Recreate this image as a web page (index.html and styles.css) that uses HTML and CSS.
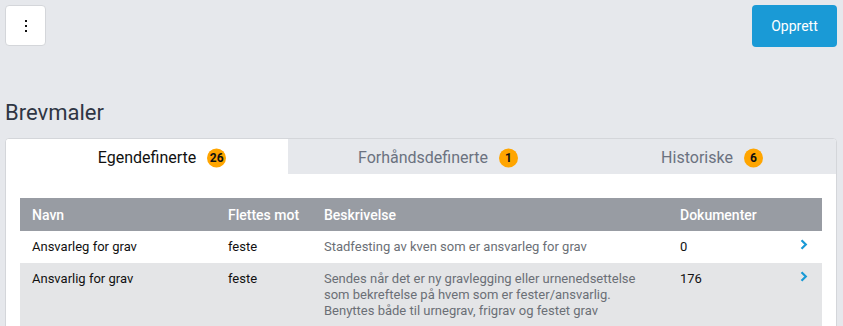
FILE: index.html
```html
<!DOCTYPE html>
<html lang="no">
<head>
<meta charset="utf-8">
<link rel="stylesheet" href="styles.css">
</head>
<body>
<div class="page">
  <div class="topbar">
    <button class="menu-btn" aria-label="Meny"><span class="dot"></span><span class="dot"></span><span class="dot"></span></button>
    <button class="primary-btn">Opprett</button>
  </div>
  <h1 class="title">Brevmaler</h1>
  <div class="card">
    <div class="tabs">
      <div class="tab active"><span class="tab-label">Egendefinerte<span class="badge">26</span></span></div>
      <div class="tab"><span class="tab-label">Forhåndsdefinerte<span class="badge">1</span></span></div>
      <div class="tab"><span class="tab-label">Historiske<span class="badge">6</span></span></div>
    </div>
    <div class="card-body">
      <table class="grid">
        <colgroup>
          <col class="c-name"><col class="c-merge"><col class="c-desc"><col class="c-docs"><col class="c-go">
        </colgroup>
        <thead>
          <tr><th>Navn</th><th>Flettes mot</th><th>Beskrivelse</th><th>Dokumenter</th><th></th></tr>
        </thead>
        <tbody>
          <tr>
            <td>Ansvarleg for grav</td><td>feste</td>
            <td class="desc">Stadfesting av kven som er ansvarleg for grav</td>
            <td>0</td>
            <td class="go"><svg width="8" height="11" viewBox="0 0 8 11"><path d="M1.5 1.2 L5.8 5.5 L1.5 9.8" fill="none" stroke="#1a9ad6" stroke-width="2.2"/></svg></td>
          </tr>
          <tr class="alt">
            <td>Ansvarlig for grav</td><td>feste</td>
            <td class="desc">Sendes når det er ny gravlegging eller urnenedsettelse<br>som bekreftelse på hvem som er fester/ansvarlig.<br>Benyttes både til urnegrav, frigrav og festet grav</td>
            <td>176</td>
            <td class="go"><svg width="8" height="11" viewBox="0 0 8 11"><path d="M1.5 1.2 L5.8 5.5 L1.5 9.8" fill="none" stroke="#1a9ad6" stroke-width="2.2"/></svg></td>
          </tr>
        </tbody>
      </table>
    </div>
  </div>
</div>
</body>
</html>
```
FILE: styles.css
```css
* { box-sizing: border-box; }
html, body { margin: 0; padding: 0; }
body {
  background: #e6e8ec;
  font-family: Roboto, "Liberation Sans", sans-serif;
  color: #111;
  overflow: hidden;
}
.page { padding: 5px 6px 0 5px; }
.topbar {
  display: flex;
  justify-content: space-between;
  align-items: flex-start;
}
.menu-btn {
  width: 41px;
  height: 41px;
  background: #fff;
  border: 1px solid #d4d6da;
  border-radius: 4px;
  display: flex;
  flex-direction: column;
  align-items: center;
  justify-content: center;
  gap: 3px;
  padding: 0;
}
.dot { width: 2px; height: 2px; background: #111; display: block; }
.primary-btn {
  width: 85px;
  height: 42px;
  background: #1a9ad6;
  color: #fff;
  border: none;
  border-radius: 4px;
  font-family: Roboto, "Liberation Sans", sans-serif;
  font-size: 14px;
  font-weight: 400;
}
.title {
  margin: 53px 0 12px 0;
  font-size: 22px;
  font-weight: 400;
  color: #2f3644;
  line-height: 26px;
}
.card {
  background: #fff;
  border: 1px solid #d4d6da;
  border-radius: 4px;
  overflow: hidden;
}
.tabs {
  display: grid;
  grid-template-columns: 282px 270px 1fr;
  height: 35px;
}
.tab {
  background: #e6e8ec;
  display: flex;
  align-items: center;
  justify-content: center;
  font-size: 16px;
  color: #6b7280;
}
.tab.active { background: #fff; color: #111; }
.tab-label { position: relative; padding-top: 1px; }
.badge {
  position: absolute;
  left: calc(100% + 11px);
  top: 50%;
  transform: translateY(-50%);
  width: 19px;
  height: 19px;
  border-radius: 50%;
  background: #ffa500;
  color: #111;
  font-size: 12px;
  font-weight: 700;
  display: flex;
  align-items: center;
  justify-content: center;
  margin-top: 1px;
}
.card-body { padding: 24px 14px 0 14px; }
.grid {
  width: 802px;
  border-collapse: collapse;
  table-layout: fixed;
  font-size: 13px;
}
.c-name { width: 196px; }
.c-merge { width: 96px; }
.c-desc { width: 356px; }
.c-docs { width: 122px; }
.c-go { width: 32px; }
.grid th {
  background: #989ca3;
  color: #fff;
  font-weight: 500;
  font-size: 14px;
  text-align: left;
  height: 33px;
  padding: 0 12px;
}
.grid td {
  vertical-align: top;
  padding: 8px 12px 8px 12px;
  line-height: 16px;
}
.grid tr.alt td { background: #e4e5e7; padding-bottom: 13px; }
.grid td.desc { color: #6b6f76; }
.grid td.go { padding: 8px 0 0 10px; line-height: 0; }
```
